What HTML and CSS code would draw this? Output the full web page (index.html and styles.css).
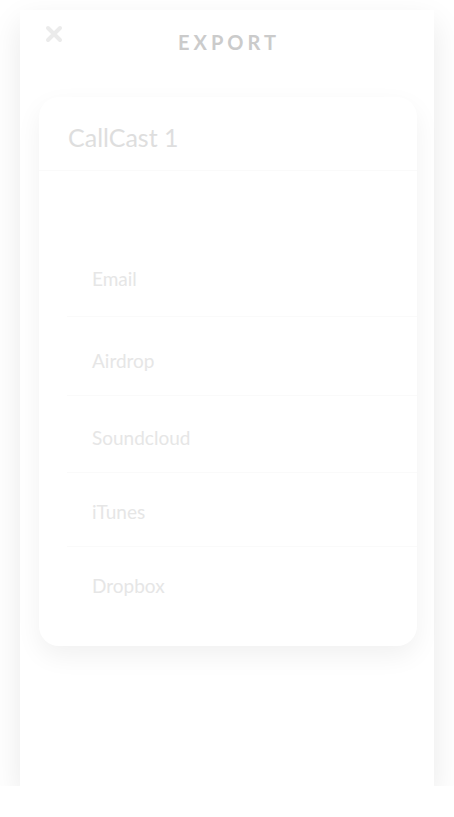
FILE: index.html
```html
<!DOCTYPE html>
<html>
<head>
<meta charset="utf-8">
<link rel="stylesheet" href="styles.css">
</head>
<body>
<div class="panel">
  <div class="header">
    <svg class="close" width="18" height="18" viewBox="0 0 18 18"><path d="M3 3 L15 15 M15 3 L3 15" stroke="#ebebeb" stroke-width="4" stroke-linecap="round"/></svg>
    <div class="title">EXPORT</div>
  </div>
  <div class="card">
    <div class="card-title">CallCast 1</div>
    <ul class="list">
      <li class="item email">Email</li>
      <li class="item airdrop">Airdrop</li>
      <li class="item soundcloud">Soundcloud</li>
      <li class="item itunes">iTunes</li>
      <li class="item dropbox">Dropbox</li>
    </ul>
  </div>
</div>
</body>
</html>
```
FILE: styles.css
```css
html, body {
  margin: 0;
  padding: 0;
  background: #ffffff;
}
body {
  padding: 10px 20px 0;
  font-family: Lato, "Noto Sans", sans-serif;
}
.panel {
  height: 776px;
  background: #ffffff;
  box-shadow: 0 12px 30px rgba(0, 0, 0, 0.09);
  display: flex;
  flex-direction: column;
}
.header {
  position: relative;
  height: 87px;
  display: flex;
  justify-content: center;
}
.close {
  position: absolute;
  left: 25px;
  top: 15px;
}
.title {
  margin-top: 20px;
  font-size: 20px;
  line-height: 24px;
  font-weight: 700;
  letter-spacing: 4px;
  color: #cbcbcb;
  padding-left: 4px;
}
.card {
  margin: 0 17px 0 19px;
  background: #ffffff;
  border-radius: 20px;
  box-shadow: 0 10px 26px rgba(0, 0, 0, 0.06);
}
.card-title {
  height: 74px;
  box-sizing: border-box;
  padding: 26px 0 0 29px;
  font-size: 25px;
  line-height: 28px;
  color: #dedede;
  border-bottom: 1px solid #fafafa;
}
.list {
  list-style: none;
  margin: 0;
  padding: 70px 0 0 28px;
}
.item {
  box-sizing: border-box;
  padding-left: 25px;
  font-size: 19px;
  line-height: 20px;
  color: #e6e6e6;
  border-bottom: 1px solid #fafafa;
}
.email { height: 76px; padding-top: 28px; }
.airdrop { height: 79px; padding-top: 34px; }
.soundcloud { height: 77px; padding-top: 32px; }
.itunes { height: 74px; padding-top: 29px; }
.dropbox { height: 99px; padding-top: 29px; border-bottom: none; }
```
